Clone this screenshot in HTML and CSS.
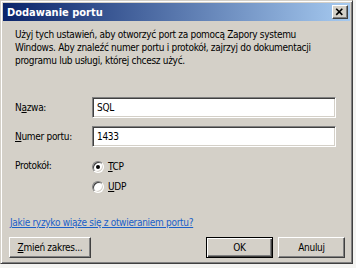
FILE: index.html
```html
<!DOCTYPE html>
<html lang="pl">
<head>
<meta charset="utf-8">
<title>Dodawanie portu</title>
<link rel="stylesheet" href="styles.css">
</head>
<body>
<div class="window">
  <div class="titlebar">
    <span class="title">Dodawanie portu</span>
    <span class="close"><svg width="16" height="14" viewBox="0 0 16 14"><path d="M4.5 3.5 L11 10 M11 3.5 L4.5 10" stroke="#000" stroke-width="1.7" fill="none"/></svg></span>
  </div>
  <div class="content">
    <p class="intro">Użyj tych ustawień, aby otworzyć port za pomocą Zapory systemu<br>Windows. Aby znaleźć numer portu i protokół, zajrzyj do dokumentacji<br>programu lub usługi, której chcesz użyć.</p>
    <div class="form">
      <div class="row">
        <span class="label">N<u>a</u>zwa:</span>
        <div class="input">SQL</div>
      </div>
      <div class="row">
        <span class="label"><u>N</u>umer portu:</span>
        <div class="input">1433</div>
      </div>
      <div class="row proto">
        <span class="label">Protokół:</span>
        <div class="radios">
          <div class="ropt"><span class="radio on"></span><span><u>T</u>CP</span></div>
          <div class="ropt"><span class="radio"></span><span><u>U</u>DP</span></div>
        </div>
      </div>
    </div>
    <a class="link" href="#">Jakie ryzyko wiąże się z otwieraniem portu?</a>
    <div class="buttons">
      <div class="btn wide"><u>Z</u>mień zakres...</div>
      <div class="group">
        <div class="btn default">OK</div>
        <div class="btn">Anuluj</div>
      </div>
    </div>
  </div>
</div>
</body>
</html>
```
FILE: styles.css
```css
html, body {
  margin: 0;
  padding: 0;
  background: #f4f4f2;
}
body {
  font-family: "DejaVu Sans Condensed", "DejaVu Sans", sans-serif;
  font-size: 10px;
  letter-spacing: -0.3px;
  color: #000;
}
.window {
  box-sizing: border-box;
  width: 353px;
  height: 264px;
  background: #d4d0c8;
  border: 1px solid;
  border-color: #d4d0c8 #404040 #404040 #d4d0c8;
  box-shadow: inset 1px 1px #fff, inset -1px -1px #808080;
  padding: 2px;
  display: flex;
  flex-direction: column;
}
.titlebar {
  height: 18px;
  background: linear-gradient(to right, #0a246a, #a6caf0);
  display: flex;
  align-items: center;
  justify-content: space-between;
  padding: 0 2px 0 4px;
}
.title {
  color: #fff;
  font-weight: bold;
  font-size: 11px;
  letter-spacing: 0;
}
.close {
  width: 16px;
  height: 14px;
  box-sizing: border-box;
  background: #d4d0c8;
  border: 1px solid;
  border-color: #fff #404040 #404040 #fff;
  box-shadow: inset -1px -1px #808080;
  display: flex;
  align-items: center;
  justify-content: center;
}
.close svg {
  display: block;
  margin: -1px 0 0 -1px;
}
.content {
  padding: 7px 5px 0 6px;
  display: flex;
  flex-direction: column;
}
.intro {
  margin: 0 0 0 6px;
  line-height: 13px;
  white-space: nowrap;
}
.form {
  margin: 30px 0 0 6px;
  display: flex;
  flex-direction: column;
  gap: 8px;
}
.row {
  display: flex;
  align-items: center;
  height: 21px;
}
.label {
  width: 77px;
}
.input {
  box-sizing: border-box;
  width: 244px;
  height: 21px;
  background: #fff;
  border: 1px solid;
  border-color: #808080 #fff #fff #808080;
  box-shadow: inset 1px 1px #404040, inset -1px -1px #d4d0c8;
  padding: 0 4px;
  display: flex;
  align-items: center;
}
.row.proto {
  margin-top: 5px;
  height: auto;
  align-items: flex-start;
}
.radios {
  display: flex;
  flex-direction: column;
  gap: 7px;
}
.ropt {
  display: flex;
  align-items: center;
  gap: 4px;
  height: 13px;
}
.radio {
  box-sizing: border-box;
  width: 12px;
  height: 12px;
  border-radius: 50%;
  background: #fff;
  border: 1px solid;
  border-color: #808080 #fff #fff #808080;
  box-shadow: inset 1px 1px #404040, inset -1px -1px #d4d0c8;
  display: flex;
  align-items: center;
  justify-content: center;
}
.radio.on::after {
  content: "";
  width: 4px;
  height: 4px;
  border-radius: 50%;
  background: #000;
}
.link {
  margin: 23px 0 0 1px;
  line-height: 13px;
  color: #1a5fc8;
  text-decoration: underline;
  white-space: nowrap;
}
.buttons {
  margin-top: 8px;
  display: flex;
  justify-content: space-between;
}
.group {
  display: flex;
  gap: 5px;
}
.btn {
  box-sizing: border-box;
  width: 67px;
  height: 21px;
  background: #d4d0c8;
  border: 1px solid;
  border-color: #fff #404040 #404040 #fff;
  box-shadow: inset -1px -1px #808080;
  display: flex;
  align-items: center;
  justify-content: center;
}
.btn.wide {
  width: 82px;
}
.btn.default {
  border-color: #000;
  box-shadow: inset 1px 1px #fff, inset -1px -1px #404040, inset -2px -2px #808080;
}
```
